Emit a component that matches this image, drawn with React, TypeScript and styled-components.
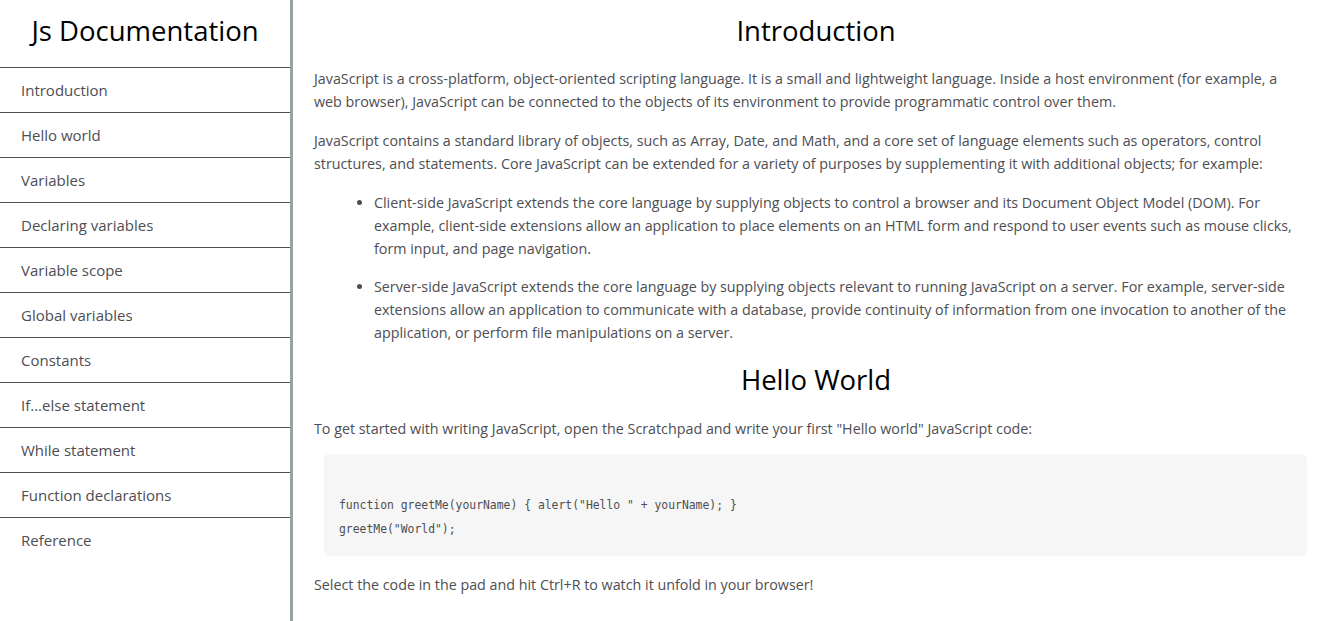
import styled, { createGlobalStyle } from "styled-components";

const GlobalStyle = createGlobalStyle`
  html, body {
    margin: 0;
    padding: 0;
    background: #ffffff;
  }
  body {
    font-family: "Open Sans", "Noto Sans", sans-serif;
    color: #4d4e53;
  }
`;

const links = [
  "Introduction",
  "Hello world",
  "Variables",
  "Declaring variables",
  "Variable scope",
  "Global variables",
  "Constants",
  "If...else statement",
  "While statement",
  "Function declarations",
  "Reference",
];

const App = () => (
  <Page>
    <GlobalStyle />
    <Navbar>
      <NavHeader>Js Documentation</NavHeader>
      <NavList>
        {links.map((l) => (
          <NavItem key={l}>
            <NavLink href="#">{l}</NavLink>
          </NavItem>
        ))}
      </NavList>
    </Navbar>
    <Main>
      <Section>
        <SectionTitle>Introduction</SectionTitle>
        <Para>
          JavaScript is a cross-platform, object-oriented scripting language. It is a small and lightweight
          language. Inside a host environment (for example, a web browser), JavaScript can be connected to the
          objects of its environment to provide programmatic control over them.
        </Para>
        <Para>
          JavaScript contains a standard library of objects, such as Array, Date, and Math, and a core set of
          language elements such as operators, control structures, and statements. Core JavaScript can be
          extended for a variety of purposes by supplementing it with additional objects; for example:
        </Para>
        <List>
          <ListItem>
            Client-side JavaScript extends the core language by supplying objects to control a browser and its
            Document Object Model (DOM). For example, client-side extensions allow an application to place
            elements on an HTML form and respond to user events such as mouse clicks, form input, and page
            navigation.
          </ListItem>
          <ListItem>
            Server-side JavaScript extends the core language by supplying objects relevant to running JavaScript
            on a server. For example, server-side extensions allow an application to communicate with a
            database, provide continuity of information from one invocation to another of the application, or
            perform file manipulations on a server.
          </ListItem>
        </List>
      </Section>
      <Section>
        <SectionTitle $second>Hello World</SectionTitle>
        <Para>
          To get started with writing JavaScript, open the Scratchpad and write your first "Hello world"
          JavaScript code:
        </Para>
        <CodeBlock>
          <CodeLine>&nbsp;</CodeLine>
          <CodeLine>function greetMe(yourName) {"{"} alert("Hello " + yourName); {"}"}</CodeLine>
          <CodeLine>greetMe("World");</CodeLine>
        </CodeBlock>
        <Para>Select the code in the pad and hit Ctrl+R to watch it unfold in your browser!</Para>
      </Section>
    </Main>
  </Page>
);

export default App;

const Page = styled.div`
  display: flex;
  min-height: 100vh;
`;

const Navbar = styled.nav`
  width: 290px;
  flex-shrink: 0;
  border-right: 3px solid #9aa1a1;
  background: #ffffff;
`;

const NavHeader = styled.header`
  height: 67px;
  display: flex;
  align-items: center;
  justify-content: center;
  font-size: 27.5px;
  color: #000000;
  padding-bottom: 6px;
  box-sizing: border-box;
`;

const NavList = styled.ul`
  list-style: none;
  margin: 0;
  padding: 0;
`;

const NavItem = styled.li`
  border-top: 1px solid #4d4e53;
  height: 45px;
  box-sizing: border-box;
  display: flex;
  align-items: center;
  padding-left: 21px;
`;

const NavLink = styled.a`
  color: #4d4e53;
  text-decoration: none;
  font-size: 15px;
`;

const Main = styled.main`
  flex: 1;
  padding: 0 32px 0 21px;
  min-width: 0;
`;

const Section = styled.section``;

const SectionTitle = styled.header<{ $second?: boolean }>`
  text-align: center;
  color: #000000;
  font-size: 27.5px;
  padding-top: ${(p) => (p.$second ? "2px" : "12px")};
  line-height: 38px;
  margin: 0 -32px ${(p) => (p.$second ? "18px" : "17px")} -21px;
`;

const Para = styled.p`
  font-size: 14.3px;
  line-height: 23px;
  margin: 0 0 16px;
`;

const List = styled.ul`
  margin: 0;
  padding-left: 60px;
`;

const ListItem = styled.li`
  font-size: 14.3px;
  line-height: 23px;
  margin-bottom: 15px;
`;

const CodeBlock = styled.pre`
  margin: -2px 0 17px 10px;
  padding: 15px;
  background: #f6f6f6;
  border-radius: 5px;
  font-family: "DejaVu Sans Mono", "Liberation Mono", monospace;
  font-size: 11.4px;
  color: #4d4e53;
`;

const CodeLine = styled.div`
  line-height: 24px;
`;
